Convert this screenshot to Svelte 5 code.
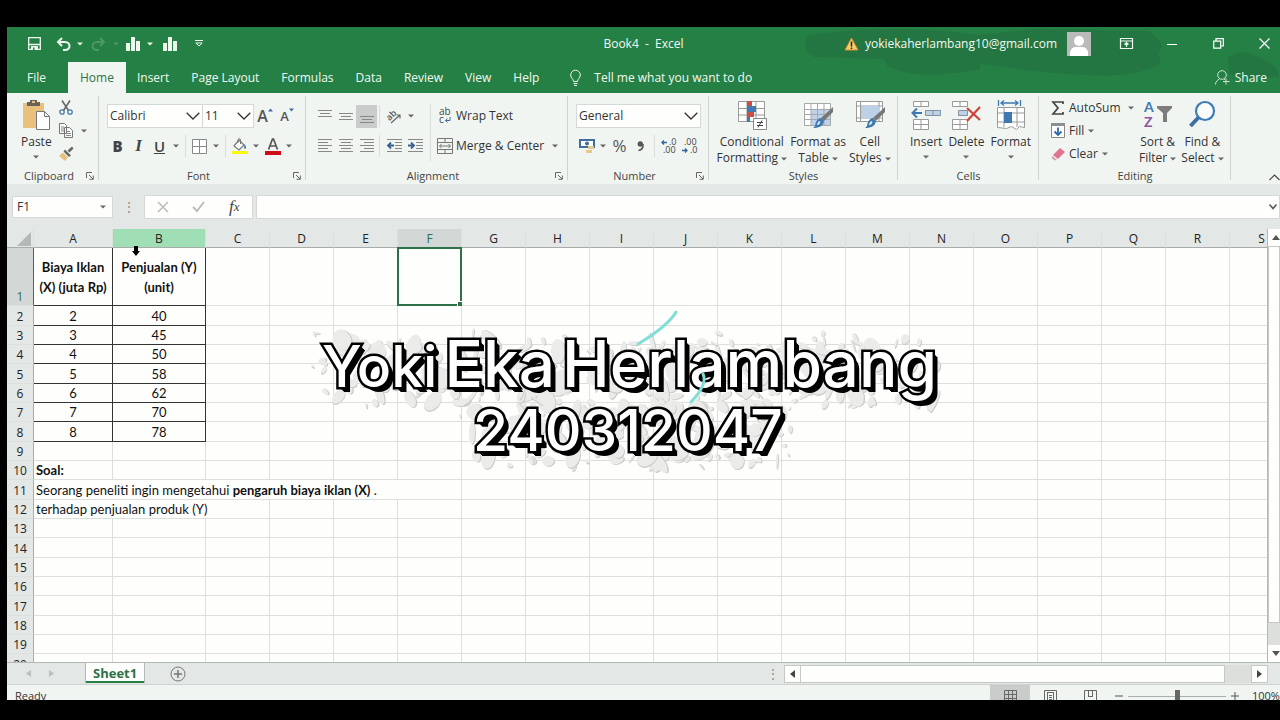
<script lang="ts">
  const menu = ['Insert', 'Page Layout', 'Formulas', 'Data', 'Review', 'View', 'Help'];
  const columns = 'ABCDEFGHIJKLMNOPQRS'.split('');
  const rest = columns.slice(2);

  const sales = [
    [2, 40],
    [3, 45],
    [4, 50],
    [5, 58],
    [6, 62],
    [7, 70],
    [8, 78]
  ];
  const lastRows = [13, 14, 15, 16, 17, 18, 19, 20];

  let selected = $state('F');
  let formula = $state('');
  let zoom = $state(50);

  // paint drops behind the caption
  let seed = 11;
  function random() {
    seed = (seed * 16807) % 2147483647;
    return seed / 2147483647;
  }

  function makeDrops(count: number, x: number, y: number, width: number, height: number, size: number) {
    return Array.from({ length: count }, () => ({
      x: Math.round(x + random() * width),
      y: Math.round(y + random() * height),
      rx: Math.round(1 + random() * size),
      ry: Math.round(1 + random() * size * 1.4),
      turn: Math.round(random() * 90 - 45)
    }));
  }

  const drops = [
    ...makeDrops(110, 8, 22, 640, 76, 3),
    ...makeDrops(190, 20, 30, 610, 62, 9),
    ...makeDrops(70, 155, 90, 330, 68, 3),
    ...makeDrops(110, 165, 96, 310, 56, 9)
  ];
</script>

{#snippet caret()}
  <svg class="caret" width="6" height="4" viewBox="0 0 6 4" aria-hidden="true"><path d="M0 .5h6L3 3.5z" fill="currentColor" /></svg>
{/snippet}

{#snippet chevron()}
  <svg class="chevron" width="14" height="8" viewBox="0 0 14 8" aria-hidden="true"><path d="M.7.7 7 7 13.3.7" fill="none" stroke="#333" stroke-width="1.3" /></svg>
{/snippet}

{#snippet launcher(name: string)}
  <button class="launcher" aria-label="{name} settings">
    <svg width="8" height="8" viewBox="0 0 8 8"><path d="M.5 6V.5H6M3 3l4 4M7.3 3.5v3.8H3.5" fill="none" stroke="#666" /></svg>
  </button>
{/snippet}

{#snippet lines(path: string)}
  <svg width="14" height="16" viewBox="0 0 14 16"><path d={path} stroke="#888" fill="none" /></svg>
{/snippet}

{#snippet bars()}
  <svg width="14" height="14" viewBox="0 0 14 14"><path d="M0 6h4v8H0zM5 0h4v14H5zM10 4h4v10h-4z" fill="#eef6ee" /></svg>
{/snippet}

{#snippet brush()}
  <path d="M30 8v5l-9 9-3-3z" fill="#777" />
  <path d="m18 19 3 3c-1 6-6 7-11 7 3-2 2-4 3-6s3-4 5-4z" fill="#3f79b0" />
  <path d="M17 22c-2 0-3 3-3 4 2 0 4-2 3-4z" fill="#dce8f2" />
{/snippet}

<div class="screen">
  <div class="window">
    <header>
      <svg class="smudge" width="480" height="66" viewBox="0 0 480 66" aria-hidden="true">
        <path d="M8 8q90-12 170 0l60-6 110 2q20 12 10 22 8 12-10 16-30 14-145-2l-23-4v6q-60 12-92-2l-4-8-70-2q-14-8-6-22zM428 30q16-10 34 2 18 8 17 18-40 4-50-4z" fill="#216b3b" opacity=".45" />
      </svg>
      <div class="titlebar">
        <div class="quick">
          <button class="w30" aria-label="Save">
            <svg width="13" height="13" viewBox="0 0 13 13"><path d="M.7.7h11.6v11.6H.7zM.7 7.5h11.6" fill="none" stroke="#eef6ee" stroke-width="1.3" /><path d="M3 9h7v4H3z" fill="#eef6ee" /><path d="M5 10.5h1.5V13H5z" fill="#258045" /></svg>
          </button>
          <button class="w28" aria-label="Undo">
            <svg width="15" height="14" viewBox="0 0 15 14"><path d="M6 1 2 5l4 4M2 5h7c6 0 6 8 0 8H7" fill="none" stroke="#eef6ee" stroke-width="2" /></svg>
          </button>
          {@render caret()}
          <button class="w30 dim" aria-label="Redo">
            <svg width="15" height="14" viewBox="0 0 15 14"><path d="m9 1 4 4-4 4M13 5H6c-6 0-6 8 0 8h2" fill="none" stroke="currentColor" stroke-width="2" /></svg>
          </button>
          <span class="dim">{@render caret()}</span>
          <button class="w28" aria-label="Column chart">{@render bars()}</button>
          {@render caret()}
          <button class="w34" aria-label="Insert chart">{@render bars()}</button>
          <button class="w24" aria-label="Customize toolbar">
            <svg width="8" height="7" viewBox="0 0 8 7"><path d="M0 .5h8M.8 3 4 6l3.200-3z" fill="none" stroke="#eef6ee" /></svg>
          </button>
        </div>
        <h1>Book4&nbsp; -&nbsp; Excel</h1>
        <div class="account">
          <svg class="warning" width="15" height="14" viewBox="0 0 15 14" aria-hidden="true"><path d="M7.500 1 14 13H1z" fill="#f5cf6e" stroke="#d98a2c" /><path d="M7.500 4.500v5M7.500 10.500v1.500" stroke="#222" stroke-width="1.500" /></svg>
          <span>yokiekaherlambang10@gmail.com</span>
          <svg class="avatar" width="24" height="24" viewBox="0 0 24 24" aria-hidden="true"><path d="M0 0h24v24H0z" fill="#b9bab9" /><circle cx="12" cy="9" r="5" fill="#fff" /><path d="M3 24c-1-8 4-9 6-9h6c3 0 7 2 6 9z" fill="#fff" /></svg>
          <button class="w46" aria-label="Ribbon display options">
            <svg width="13" height="11" viewBox="0 0 13 11"><path d="M.5.500h12v10H.5zM.5 3h12M6.500 9V4.500M4.500 6.500l2-2 2 2" fill="none" stroke="#eef6ee" stroke-width="1.200" /></svg>
          </button>
          <button class="w46" aria-label="Minimize">
            <svg width="10" height="10" viewBox="0 0 10 10"><path d="M0 5.500h10" stroke="#fff" /></svg>
          </button>
          <button class="w46" aria-label="Restore">
            <svg width="11" height="11" viewBox="0 0 11 11"><path d="M.7 3.200h7v7h-7zM3 3V.7h7.300V8H8" fill="none" stroke="#fff" stroke-width="1.200" /></svg>
          </button>
          <button class="w46" aria-label="Close">
            <svg width="11" height="11" viewBox="0 0 11 11"><path d="m.5.500 10 10M10.500.500l-10 10" stroke="#fff" stroke-width="1.200" /></svg>
          </button>
        </div>
      </div>
      <nav>
        <button class="file">File</button>
        <button class="current">Home</button>
        {#each menu as item}
          <button>{item}</button>
        {/each}
        <button class="tell">
          <svg width="11" height="16" viewBox="0 0 11 16"><path d="M3.500 11.500c0-3-2.800-3-2.800-6.500a4.800 4.800 0 0 1 9.600 0c0 3.500-2.800 3.500-2.800 6.500zM3.500 13.500h4M4 15.400h3" fill="none" stroke="#eef6ee" /></svg>
          Tell me what you want to do
        </button>
        <button class="share">
          <svg width="15" height="15" viewBox="0 0 15 15"><circle cx="7" cy="5" r="4.300" fill="none" stroke="#cfe5d3" /><path d="M.5 14.500c0-3 2-4.500 4-5.500M9 9l1 .7M11 8.500v6M8 11.500h6.500" fill="none" stroke="#cfe5d3" /></svg>
          Share
        </button>
      </nav>
    </header>

    <div class="ribbon">
      <section>
        <div class="body clipboard">
          <button class="big">
            <svg width="30" height="32" viewBox="0 0 30 32"><path d="M2 4h21v25H2z" fill="#e9c07c" /><path d="M6 3h3V1h7v2h3v4H6z" fill="#66625c" /><path d="M11 2h3v2h-3z" fill="#e9c07c" /><path d="M15.500 12.500h8l5 5v13h-13zM23.500 12.500v5h5" fill="#fff" stroke="#777" /></svg>
            <span>Paste</span>
            {@render caret()}
          </button>
          <div class="stack">
            <button aria-label="Cut">
              <svg width="14" height="15" viewBox="0 0 14 15"><path d="m3 .500 6.500 10M11 .500l-6.500 10" stroke="#666" stroke-width="1.600" /><circle cx="3" cy="12" r="2.200" fill="none" stroke="#4b7ba8" stroke-width="1.300" /><circle cx="11" cy="12" r="2.200" fill="none" stroke="#4b7ba8" stroke-width="1.300" /></svg>
            </button>
            <button aria-label="Copy">
              <svg width="14" height="15" viewBox="0 0 14 15"><path d="M.5.500h5l2 2v8h-7zM5.500 4.500h5l3 3v7h-8z" fill="#f8faf8" stroke="#777" /><path d="M2 4h3M2 6h3M2 8h3M7 8.500h4M7 10.500h5M7 12.500h5" stroke="#888" /></svg>
              {@render caret()}
            </button>
            <button aria-label="Format painter">
              <svg width="15" height="15" viewBox="0 0 15 15"><path d="m13 .500 1.500 2-4 4-2-2z" fill="#666" /><path d="m6 3.500 6 6-2 1.500-5.500-5.500z" fill="#666" /><path d="M4 6.500 9 11.500 6 15 0 10z" fill="#e9c07c" /></svg>
            </button>
          </div>
        </div>
        <footer><h2>Clipboard</h2>{@render launcher('Clipboard')}</footer>
      </section>

      <section>
        <div class="body font">
          <div class="row">
            <label class="combo grow"><select aria-label="Font name"><option>Calibri</option><option>Arial</option></select>{@render chevron()}</label>
            <label class="combo size"><select aria-label="Font size"><option>11</option><option>12</option></select>{@render chevron()}</label>
            <button class="w22 letter" aria-label="Increase font size">A<svg width="5" height="4" viewBox="0 0 5 4"><path d="M0 3.500 2.500.500 5 3.500z" fill="#3f6d9e" /></svg></button>
            <button class="w22 letter small" aria-label="Decrease font size">A<svg width="5" height="4" viewBox="0 0 5 4"><path d="M0 .500h5L2.500 3.500z" fill="#3f6d9e" /></svg></button>
          </div>
          <div class="row">
            <button class="w21 mark"><b>B</b></button>
            <button class="w21 mark"><i>I</i></button>
            <button class="w21 mark"><u>U</u></button>
            {@render caret()}
            <span class="bar"></span>
            <button class="w21" aria-label="Borders">
              <svg width="15" height="15" viewBox="0 0 15 15"><path d="M.5.500h14v14H.5zM7.500 0v15M0 7.500h15" fill="#fff" stroke="#888" /></svg>
            </button>
            {@render caret()}
            <span class="bar"></span>
            <button class="w21" aria-label="Fill colour">
              <svg width="16" height="16" viewBox="0 0 16 16"><path d="m7 2 5 5-5 5-5-4z" fill="#fff" stroke="#777" stroke-width="1.200" /><path d="M6 5V1.500q1.500-2 2.500 0V6" fill="none" stroke="#777" /><path d="M12 6c3 2 2 5 1 5-2-1 0-3-1-5z" fill="#3f79b0" /><path d="M0 13h16v3H0z" fill="#fbf90a" /></svg>
            </button>
            {@render caret()}
            <button class="w21" aria-label="Font colour">
              <svg width="16" height="17" viewBox="0 0 16 17"><path d="M3.500 11.500 7.500 1h1l4 10.500M5 8h6" fill="none" stroke="#555" stroke-width="1.700" /><path d="M0 13h16v4H0z" fill="#d00d16" /></svg>
            </button>
            {@render caret()}
          </div>
        </div>
        <footer><h2>Font</h2>{@render launcher('Font')}</footer>
      </section>

      <section>
        <div class="body split">
          <div class="aligns">
            <div class="row tight">
              <button class="w21" aria-label="Top align">{@render lines('M0 2.500h14M2 5.500h10M0 8.500h14')}</button>
              <button class="w21" aria-label="Middle align">{@render lines('M0 5.500h14M2 8.500h10M0 11.500h14')}</button>
              <button class="w21 on" aria-label="Bottom align">{@render lines('M0 8.500h14M2 11.500h10M0 14.500h14')}</button>
              <span class="bar"></span>
              <button class="w21" aria-label="Orientation">
                <svg width="15" height="15" viewBox="0 0 15 15"><text x="0" y="10" transform="rotate(-45 4 8)" font-size="9" font-weight="600" fill="#555">ab</text><path d="m4 14 9-8M9.500 6H13v3.500" fill="none" stroke="#666" stroke-width="1.200" /></svg>
              </button>
              {@render caret()}
            </div>
            <div class="row tight">
              <button class="w21" aria-label="Align left">{@render lines('M0 1.500h14M0 4.500h10M0 7.500h14M0 10.500h10M0 13.500h14')}</button>
              <button class="w21" aria-label="Center">{@render lines('M0 1.500h14M2 4.500h10M0 7.500h14M2 10.500h10M0 13.500h14')}</button>
              <button class="w21" aria-label="Align right">{@render lines('M0 1.500h14M4 4.500h10M0 7.500h14M4 10.500h10M0 13.500h14')}</button>
              <span class="bar"></span>
              <button class="w21" aria-label="Decrease indent">
                <svg width="15" height="16" viewBox="0 0 15 16"><path d="M0 1.500h15M8 4.500h7M8 7.500h7M8 10.500h7M0 13.500h15" stroke="#888" /><path d="M7 7.500H1.500M4 4.500l-3 3 3 3" fill="none" stroke="#3a628f" stroke-width="1.800" /></svg>
              </button>
              <button class="w21" aria-label="Increase indent">
                <svg width="15" height="16" viewBox="0 0 15 16"><path d="M0 1.500h15M8 4.500h7M8 7.500h7M8 10.500h7M0 13.500h15" stroke="#888" /><path d="M0 7.500h5.500M3 4.500l3 3-3 3" fill="none" stroke="#3a628f" stroke-width="1.800" /></svg>
              </button>
            </div>
          </div>
          <div class="merges">
            <div class="row">
              <button class="text">
                <svg width="16" height="18" viewBox="0 0 16 18"><text x="2" y="8" font-size="10" fill="#444">ab</text><text x="2" y="16" font-size="10" fill="#444">c</text><path d="M13 10v3.500H8.500M10.500 11.500l-2 2 2 2" fill="none" stroke="#4569a0" /></svg>
                Wrap Text
              </button>
            </div>
            <div class="row">
              <button class="text">
                <svg width="16" height="16" viewBox="0 0 16 16"><path d="M.5.500h15v15H.5zM0 4.500h16M0 11.500h16M8 0v4.500M8 11.500V16M2.500 8h11M4.500 6l-2 2 2 2M11.500 6l2 2-2 2" fill="none" stroke="#777" /></svg>
                Merge &amp; Center
                {@render caret()}
              </button>
            </div>
          </div>
        </div>
        <footer><h2>Alignment</h2>{@render launcher('Alignment')}</footer>
      </section>

      <section>
        <div class="body number">
          <div class="row">
            <label class="combo grow"><select aria-label="Number format"><option>General</option><option>Number</option></select>{@render chevron()}</label>
          </div>
          <div class="row">
            <button class="w21" aria-label="Accounting format">
              <svg width="16" height="16" viewBox="0 0 16 16"><path d="M1 2h14v7H1z" fill="#fff" stroke="#3f6d9e" stroke-width="2" /><circle cx="8" cy="5.500" r="2" fill="#3f6d9e" /><path d="M9 8h6v3H9zM7 12h6v3H7z" fill="#e9c88c" /></svg>
            </button>
            {@render caret()}
            <button class="w21 percent">%</button>
            <button class="w21 comma" aria-label="Comma style"><svg width="7" height="10" viewBox="0 0 7 10"><circle cx="3.300" cy="3" r="2.700" fill="#555" /><path d="M6 3c.5 4-2 6-4.500 6.500" fill="none" stroke="#555" stroke-width="1.500" /></svg></button>
            <span class="bar"></span>
            <button class="w21" aria-label="Increase decimal">
              <svg width="16" height="18" viewBox="0 0 16 18"><text x="8" y="8" font-size="9" fill="#444">.0</text><text x="2" y="16" font-size="9" fill="#444">.00</text><path d="M6 5.500H1M3 3.500l-2 2 2 2" fill="none" stroke="#33649a" stroke-width="1.300" /></svg>
            </button>
            <button class="w21" aria-label="Decrease decimal">
              <svg width="16" height="18" viewBox="0 0 16 18"><text x="2" y="8" font-size="9" fill="#444">.00</text><text x="8" y="16" font-size="9" fill="#444">.0</text><path d="M0 13.500h5M3 11.500l2 2-2 2" fill="none" stroke="#33649a" stroke-width="1.300" /></svg>
            </button>
          </div>
        </div>
        <footer><h2>Number</h2>{@render launcher('Number')}</footer>
      </section>

      <section>
        <div class="body styles">
          <button class="big">
            <svg width="30" height="32" viewBox="0 0 30 32"><path d="M1.500 2.500h26v20h-26zM1 9.500h27M1 16h27M10 2v21M19 2v21" fill="#fff" stroke="#999" /><path d="M10 2h5v5h-5zM10 13h7v5h-7z" fill="#c94f46" /><path d="M10 7h9v6h-9zM10 18h3v5h-3z" fill="#3f79b0" /><path d="M16.500 19.500h13v11h-13z" fill="#fff" stroke="#888" /><path d="M20 23.500h6M20 26.500h6M25 21.500l-4 7" stroke="#444" /></svg>
            <span>Conditional<br />Formatting {@render caret()}</span>
          </button>
          <button class="big">
            <svg width="30" height="32" viewBox="0 0 30 32"><path d="M1.500 4.500h26v22h-26z" fill="#fff" /><path d="M8 10h19v16H8z" fill="#bed3ea" /><path d="M1.500 4.500h26v22h-26zM1 10.500h27M1 15.500h27M1 20.500h27M8 4v23M14.500 4v23M21 4v23" fill="none" stroke="#a5a9ab" />{@render brush()}</svg>
            <span>Format as<br />Table {@render caret()}</span>
          </button>
          <button class="big">
            <svg width="30" height="32" viewBox="0 0 30 32"><path d="M1.500 2.500h26v20h-26zM1 7h27M5.500 2v21M24 2v21M1 19h27" fill="#fff" stroke="#999" /><path d="M6 7h18v12H6z" fill="#bcd0e6" />{@render brush()}</svg>
            <span>Cell<br />Styles {@render caret()}</span>
          </button>
        </div>
        <footer><h2>Styles</h2></footer>
      </section>

      <section>
        <div class="body cells">
          <button class="big">
            <svg width="30" height="32" viewBox="0 0 30 32"><path d="M2.500 2.500h15v5h-15zM10 2v6M2.500 20.500h15v10h-15zM2 25.500h16M10 20v11" fill="#fff" stroke="#999" /><path d="M14.500 11.500h15v5h-15zM22 11v6" fill="#bfd1e4" stroke="#8091a3" /><path d="M11 14H1.500M6 9.500 1.500 14 6 18.500" fill="none" stroke="#3f79b0" stroke-width="2" /></svg>
            <span>Insert</span>
            {@render caret()}
          </button>
          <button class="big">
            <svg width="30" height="32" viewBox="0 0 30 32"><path d="M1.500 2.500h15v5h-15zM9 2v6M1.500 20.500h15v10h-15zM1 25.500h16M9 20v11" fill="#fff" stroke="#999" /><path d="M7.500 11.500h9v5h-9z" fill="#bfd1e4" stroke="#8091a3" /><path d="m16 9 13 12M29 8 16 22" stroke="#cf4436" stroke-width="2.200" /></svg>
            <span>Delete</span>
            {@render caret()}
          </button>
          <button class="big">
            <svg width="30" height="32" viewBox="0 0 30 32"><path d="M1.500 8.500h27v20l-5-1-3 3-5-3-5 2-9-1zM1 14h28M1 23h28M8 8v20M21 8v20" fill="#fff" stroke="#999" /><path d="M8 13h8v11H8z" fill="#3f79b0" /><path d="M2.500 1v6M24.500 1v6M5 4h17M8 1.500 5 4l3 2.500M19 1.500 22 4l-3 2.500" fill="none" stroke="#3f79b0" stroke-width="1.300" /></svg>
            <span>Format</span>
            {@render caret()}
          </button>
        </div>
        <footer><h2>Cells</h2></footer>
      </section>

      <section>
        <div class="body editing">
          <div class="list">
            <button class="text">
              <svg width="14" height="14" viewBox="0 0 14 14"><path d="M12 3V1H2l5 6-5 6h10v-2" fill="none" stroke="#444" stroke-width="1.700" /></svg>
              <span class="wide">AutoSum</span>{@render caret()}
            </button>
            <button class="text">
              <svg width="14" height="15" viewBox="0 0 14 15"><path d="M.5.500h13v14H.5z" fill="#fff" stroke="#888" /><path d="M0 0h14v3H0z" fill="#8b8f92" /><path d="M7 4.500V12M3.500 8.500 7 12l3.500-3.500" fill="none" stroke="#2f69a6" stroke-width="1.800" /></svg>
              Fill {@render caret()}
            </button>
            <button class="text">
              <svg width="14" height="14" viewBox="0 0 14 14"><path d="m9 1 5 4-7 7-5-4z" fill="#dd7590" /><path d="m1.500 9 4.500 4-2 .500-3.500-2.500z" fill="#c9a3ad" /></svg>
              Clear {@render caret()}
            </button>
          </div>
          <button class="big">
            <svg class="sort" width="30" height="32" viewBox="0 0 30 32"><text x="1" y="13" font-size="14" fill="#3f79b0">A</text><text x="1" y="28" font-size="14" fill="#8757a5">Z</text><path d="M14 7h15v2l-5 5v9h-4v-9l-6-5z" fill="#7d7d7d" /></svg>
            <span>Sort &amp;<br />Filter {@render caret()}</span>
          </button>
          <button class="big">
            <svg width="30" height="32" viewBox="0 0 30 32"><circle cx="18" cy="12" r="9" fill="#fbfdfd" stroke="#3c7cb8" stroke-width="2.200" /><path d="m11.500 18.500-8 8.500" stroke="#3c70a5" stroke-width="4" /></svg>
            <span>Find &amp;<br />Select {@render caret()}</span>
          </button>
        </div>
        <footer><h2>Editing</h2></footer>
      </section>

      <div class="collapse">
        <button aria-label="Collapse the ribbon"><svg width="11" height="7" viewBox="0 0 11 7"><path d="M.5 6 5.500 1l5 5" fill="none" stroke="#444" stroke-width="1.200" /></svg></button>
      </div>
    </div>

    <div class="formula">
      <button class="name">F1 {@render caret()}</button>
      <span class="grip">⋮</span>
      <div class="checks">
        <button aria-label="Cancel"><svg width="12" height="12" viewBox="0 0 12 12"><path d="m1 1 10 10M11 1 1 11" stroke="#bbb" stroke-width="1.500" /></svg></button>
        <button aria-label="Enter"><svg width="13" height="11" viewBox="0 0 13 11"><path d="m1 6 4 4 7-9" fill="none" stroke="#bbb" stroke-width="2" /></svg></button>
        <button class="fx">f<small>x</small></button>
      </div>
      <label class="input"><input aria-label="Formula" bind:value={formula} /><svg width="8" height="6" viewBox="0 0 8 6" aria-hidden="true"><path d="m.5.500 3.500 4 3.500-4" fill="none" stroke="#555" stroke-width="1.500" /></svg></label>
    </div>

    <main>
      <div class="sheet">
        <table>
          <colgroup>
            <col class="numbers" />
            <col class="first" />
            <col class="second" />
            {#each rest as name (name)}<col />{/each}
          </colgroup>
          <thead>
            <tr>
              <td class="corner"><svg width="14" height="14" viewBox="0 0 14 14" aria-hidden="true"><path d="M14 0v14H0z" fill="#b4b8b6" /></svg></td>
              {#each columns as name (name)}
                <th scope="col" class:active={name == selected} class:hover={name == 'B'}>{name}</th>
              {/each}
            </tr>
          </thead>
          <tbody>
            <tr class="tall">
              <th scope="row" class="active">1</th>
              <td class="boxed strong">Biaya Iklan<br />(X) (juta Rp)</td>
              <td class="boxed strong">Penjualan (Y)<br />(unit)</td>
              {#each rest as name (name)}
                <td>{#if name == selected}<span class="selection"></span>{/if}</td>
              {/each}
            </tr>
            {#each sales as [cost, units], i}
              <tr>
                <th scope="row">{i + 2}</th>
                <td class="boxed">{cost}</td>
                <td class="boxed">{units}</td>
                {#each rest as name (name)}<td></td>{/each}
              </tr>
            {/each}
            <tr>
              <th scope="row">9</th>
              {#each columns as name (name)}<td></td>{/each}
            </tr>
            <tr>
              <th scope="row">10</th>
              <td><b>Soal:</b></td>
              {#each columns.slice(1) as name (name)}<td></td>{/each}
            </tr>
            <tr>
              <th scope="row">11</th>
              <td colspan="6">Seorang peneliti ingin mengetahui <b>pengaruh biaya iklan (X)</b> .</td>
              {#each columns.slice(6) as name (name)}<td></td>{/each}
            </tr>
            <tr>
              <th scope="row">12</th>
              <td colspan="3">terhadap penjualan produk (Y)</td>
              {#each columns.slice(3) as name (name)}<td></td>{/each}
            </tr>
            {#each lastRows as row}
              <tr>
                <th scope="row">{row}</th>
                {#each columns as name (name)}<td></td>{/each}
              </tr>
            {/each}
          </tbody>
        </table>
        <svg class="pointer" width="8" height="11" viewBox="0 0 8 11" aria-hidden="true"><path d="M2 0h4v5h2L4 10 0 5h2z" /></svg>
      </div>
      <div class="vertical">
        <button aria-label="Scroll up"><svg width="8" height="5" viewBox="0 0 8 5"><path d="M0 5 4 0l4 5z" fill="#555" /></svg></button>
        <div class="thumb"></div>
        <button aria-label="Scroll down"><svg width="8" height="5" viewBox="0 0 8 5"><path d="M0 0h8L4 5z" fill="#555" /></svg></button>
      </div>
    </main>

    <div class="sheets">
      <button class="step" aria-label="Previous sheet"><svg width="5" height="7" viewBox="0 0 5 7"><path d="M5 0v7L0 3.500z" fill="#bcc0be" /></svg></button>
      <button class="step" aria-label="Next sheet"><svg width="5" height="7" viewBox="0 0 5 7"><path d="M0 0v7l5-3.500z" fill="#bcc0be" /></svg></button>
      <button class="tab">Sheet1</button>
      <button class="add" aria-label="New sheet"><svg width="16" height="16" viewBox="0 0 16 16"><circle cx="8" cy="8" r="7" fill="none" stroke="#777" /><path d="M8 4v8M4 8h8" stroke="#777" stroke-width="1.500" /></svg></button>
      <span class="grip">⋮</span>
      <div class="horizontal">
        <button aria-label="Scroll left"><svg width="5" height="8" viewBox="0 0 5 8"><path d="M5 0v8L0 4z" fill="#444" /></svg></button>
        <div class="thumb"></div>
        <button aria-label="Scroll right"><svg width="5" height="8" viewBox="0 0 5 8"><path d="M0 0v8l5-4z" fill="#444" /></svg></button>
      </div>
    </div>

    <div class="status">
      <span class="ready">Ready</span>
      <button class="view on" aria-label="Normal view"><svg width="13" height="13" viewBox="0 0 13 13"><path d="M.5.500h12v12H.5zM0 4.500h13M0 8.500h13M4.500 0v13M8.500 0v13" fill="none" stroke="#666" /></svg></button>
      <button class="view" aria-label="Page layout view"><svg width="13" height="13" viewBox="0 0 13 13"><path d="M.5.500h12v12H.5zM3.500 3v10M9.500 3v10M3 2.500h7M5 5.500h3M5 7.500h3M5 9.500h3" fill="none" stroke="#666" /></svg></button>
      <button class="view" aria-label="Page break view"><svg width="13" height="13" viewBox="0 0 13 13"><path d="M.5.500h12v12H.5zM4.500 0v7M8.500 0v7M4 6.500h5" fill="none" stroke="#666" /></svg></button>
      <button class="zoom" aria-label="Zoom out"><svg width="8" height="8" viewBox="0 0 8 8"><path d="M0 4h8" stroke="#555" /></svg></button>
      <input type="range" aria-label="Zoom" bind:value={zoom} />
      <button class="zoom" aria-label="Zoom in"><svg width="8" height="8" viewBox="0 0 8 8"><path d="M0 4h8M4 0v8" stroke="#555" /></svg></button>
      <span class="amount">100%</span>
    </div>

    <div class="caption">
      <svg width="660" height="170" viewBox="0 0 660 170" aria-hidden="true">
        {#each drops as drop}
          <ellipse cx={drop.x + 1} cy={drop.y + 1} rx={drop.rx} ry={drop.ry} transform="rotate({drop.turn} {drop.x} {drop.y})" fill="#cbccca" />
          <ellipse cx={drop.x} cy={drop.y} rx={drop.rx} ry={drop.ry} transform="rotate({drop.turn} {drop.x} {drop.y})" fill="#ebebe9" />
        {/each}
      </svg>
      <p><span class="lead">Yoki</span><span>Eka</span><span>Herlambang</span></p>
      <p class="id">240312047</p>
      <svg width="660" height="170" viewBox="0 0 660 170" aria-hidden="true">
        <path d="M371 2q-8 14-38 32M398 64q5 10-12 28" fill="none" stroke="#7edfd6" stroke-width="3" stroke-linecap="round" />
      </svg>
    </div>
  </div>
</div>

<style>
  :global(body) {
    margin: 0;
    background: #000;
  }

  .screen {
    box-sizing: border-box;
    height: 100vh;
    padding: 27px 0 20px 7px;
    overflow: hidden;
    background: #000;
    font-family: 'Open Sans', 'Noto Sans', sans-serif;
    font-size: 12px;
    line-height: 16px;
    color: #333;
  }

  .window {
    position: relative;
    display: flex;
    flex-direction: column;
    height: 100%;
    overflow: hidden;
    background: #e3e7e6;
  }

  button,
  input,
  select {
    padding: 0;
    border: 0;
    background: none;
    font: inherit;
    color: inherit;
  }

  button {
    display: flex;
    flex-shrink: 0;
    align-items: center;
    justify-content: center;
    white-space: nowrap;
  }

  svg {
    flex-shrink: 0;
    overflow: visible;
  }

  h1,
  h2,
  p {
    margin: 0;
    font-size: 12px;
    font-weight: 400;
  }

  header {
    position: relative;
    background: #258045;
    color: #f2f9f2;
  }

  .smudge {
    position: absolute;
    top: 0;
    right: 0;
  }

  .titlebar {
    position: relative;
    display: grid;
    grid-template-columns: 1fr auto 1fr;
    align-items: center;
    height: 33px;
  }

  .quick,
  .account {
    display: flex;
    align-items: center;
  }

  .quick {
    padding-left: 12px;
  }

  .dim {
    display: flex;
    color: #4c9965;
  }

  .account {
    justify-content: flex-end;
  }

  .warning {
    margin-right: 6px;
  }

  .avatar {
    margin: 0 12px 0 10px;
  }

  .w21 { width: 21px; }
  .w22 { width: 22px; }
  .w24 { width: 24px; }
  .w28 { width: 28px; }
  .w30 { width: 30px; }
  .w34 { width: 34px; }
  .w46 { width: 46px; }

  .account .w46:last-child {
    width: 32px;
    margin-left: 7px;
  }

  nav {
    position: relative;
    display: flex;
    height: 33px;
    align-items: flex-end;
  }

  nav button {
    height: 31px;
    padding: 0 11px;
  }

  nav .file {
    padding: 0 22px 0 20px;
  }

  nav .current {
    padding: 0 12px;
    background: #f1f5f2;
    color: #2c7148;
  }

  nav .tell {
    gap: 13px;
    padding-left: 20px;
  }

  nav .share {
    gap: 5px;
    margin-left: auto;
    padding-right: 13px;
  }

  .ribbon {
    display: grid;
    grid-template-columns: 92fr 207fr 262fr 141fr 189fr 141fr 192fr 49fr;
    height: 91px;
    background: #f1f5f2;
  }

  section {
    display: flex;
    flex-direction: column;
    min-width: 0;
    background: linear-gradient(#cfd3d0, #cfd3d0) right 3px / 1px 84px no-repeat;
  }

  .body {
    flex: 1;
    min-height: 0;
  }

  footer {
    display: flex;
    height: 16px;
    padding: 0 5px;
  }

  footer h2 {
    flex: 1;
    font-size: 11px;
    text-align: center;
    color: #444;
  }

  .row {
    display: flex;
    align-items: center;
    height: 24px;
  }

  .row + .row {
    margin-top: 6px;
  }

  .caret {
    display: inline-block;
    vertical-align: middle;
  }

  .ribbon .caret,
  .formula .caret {
    color: #666;
  }

  .bar {
    width: 1px;
    height: 22px;
    margin: 0 3px;
    background: #d9dddb;
  }

  .font .caret,
  .number .caret {
    margin: 0 3px;
  }

  .tight .bar {
    margin: 0 4px 0 2px;
  }

  .tight .caret {
    margin-left: 3px;
  }

  .big {
    flex-direction: column;
    justify-content: flex-start;
  }

  .big > svg:first-child {
    margin: 6px 0 3px;
  }

  .big > .caret {
    margin-top: 5px;
  }

  .sort {
    font-family: Lato, sans-serif;
    font-weight: 700;
  }

  .clipboard {
    display: flex;
    padding-left: 14px;
  }

  .stack {
    padding: 6px 0 0 7px;
  }

  .stack button {
    gap: 8px;
    height: 17px;
    margin-bottom: 6px;
  }

  .font,
  .number {
    padding: 11px 8px 0;
  }

  .combo {
    position: relative;
    display: block;
    height: 22px;
    border: 1px solid #d4d8d6;
    background: #fefffd;
  }

  .combo.grow {
    flex: 1;
  }

  .combo.size {
    width: 50px;
    margin-left: -1px;
  }

  .combo select {
    width: 100%;
    height: 100%;
    padding-left: 2px;
    appearance: none;
  }

  .chevron {
    position: absolute;
    top: 7px;
    right: 2px;
  }

  .letter {
    align-items: flex-start;
    font-size: 16px;
    font-weight: 600;
    color: #555;
  }

  .letter.small {
    font-size: 13px;
  }

  .mark {
    font-size: 15px;
    font-weight: 600;
    color: #444;
  }

  .mark i {
    font-family: 'Liberation Serif', serif;
    font-size: 17px;
  }

  .split {
    display: flex;
    padding: 11px 0 0 8px;
  }

  .on {
    height: 23px;
    background: #c9cccb;
  }

  .aligns {
    width: 116px;
    height: 57px;
    border-right: 1px solid #d9dddb;
  }

  .merges {
    padding-left: 6px;
  }

  .text {
    gap: 3px;
  }

  .merges .caret {
    margin-left: 5px;
  }

  .percent {
    font-size: 17px;
    color: #555;
  }

  .styles,
  .cells {
    display: flex;
    justify-content: center;
    gap: 3px;
  }

  .cells {
    gap: 6px;
    padding-left: 4px;
  }

  .editing {
    display: flex;
    gap: 5px;
    padding-left: 12px;
  }

  .list {
    padding-top: 4px;
  }

  .list button {
    gap: 4px;
    height: 21px;
    margin-bottom: 2px;
  }

  .wide {
    min-width: 55px;
    text-align: left;
  }

  .collapse {
    display: flex;
    align-items: flex-end;
    justify-content: flex-end;
    padding-bottom: 3px;
  }

  .formula {
    display: flex;
    align-items: center;
    height: 45px;
    padding-left: 5px;
  }

  .name,
  .checks,
  .input {
    height: 22px;
    border: 1px solid #d4d8d6;
    background: #fefffd;
  }

  .name {
    justify-content: space-between;
    width: 101px;
    padding: 0 6px 0 4px;
  }

  .grip {
    width: 31px;
    text-align: center;
    color: #888;
  }

  .checks {
    display: flex;
    width: 107px;
  }

  .checks button {
    flex: 1;
  }

  .fx {
    font-family: 'Liberation Serif', serif;
    font-size: 17px;
    font-style: italic;
    color: #444;
  }

  .fx small {
    font-size: 13px;
  }

  .input {
    display: flex;
    flex: 1;
    align-items: center;
    margin-left: 3px;
    padding-right: 2px;
  }

  .input input {
    flex: 1;
    min-width: 0;
    outline: none;
  }

  main {
    display: flex;
    flex: 1;
    min-height: 0;
    border-bottom: 1px solid #b4b8b6;
  }

  .sheet {
    position: relative;
    flex: 1;
    min-width: 0;
    overflow: hidden;
    border-right: 1px solid #b4b8b6;
    background: #fefffd;
  }

  table {
    table-layout: fixed;
    width: 1287px;
    border-spacing: 0;
  }

  col {
    width: 64px;
  }

  .numbers {
    width: 27px;
  }

  .first {
    width: 79px;
  }

  .second {
    width: 93px;
  }

  th,
  td {
    position: relative;
    box-sizing: border-box;
    height: 19px;
    padding: 0;
    border-right: 1px solid #dcdfdc;
    border-bottom: 1px solid #dcdfdc;
    line-height: 16px;
    white-space: nowrap;
  }

  tbody td {
    padding-left: 2px;
    font-family: Lato, 'Open Sans', sans-serif;
    font-size: 13px;
    color: #111;
  }

  tbody tr:nth-child(3n + 2) > * {
    height: 20px;
  }

  th,
  .corner {
    background: #e3e7e6;
    font-weight: 400;
    color: #222;
  }

  thead th,
  .corner {
    padding-top: 2px;
    border-bottom-color: #a8acaa;
  }

  .corner svg {
    display: block;
    margin-left: 10px;
  }

  tbody th {
    border-right-color: #a8acaa;
    vertical-align: bottom;
  }

  th.active {
    background: #d3d7d5;
    color: #2c7148;
  }

  tbody th.active {
    border-right-color: #258045;
  }

  th.hover {
    background: #a0dfb5;
  }

  .tall > * {
    height: 58px;
  }

  td.boxed {
    padding: 0;
    border-color: #333;
    text-align: center;
  }

  td.strong {
    font-weight: 700;
    line-height: 20px;
  }

  .selection {
    position: absolute;
    inset: -1px;
    border: 2px solid #2c7148;
  }

  .selection::after {
    content: '';
    position: absolute;
    right: -3px;
    bottom: -3px;
    width: 4px;
    height: 4px;
    border: 1px solid #fff;
    background: #2c7148;
  }

  .pointer {
    position: absolute;
    top: 17px;
    left: 125px;
  }

  .vertical {
    display: flex;
    flex-direction: column;
    width: 12px;
    overflow: hidden;
    background: #dcdfdc;
  }

  .vertical button {
    width: 16px;
    height: 17px;
    background: #fefffd;
  }

  .vertical .thumb {
    flex: 1;
    margin-bottom: 22px;
    border: 1px solid #c4c8c6;
    background: #fefffd;
  }

  .sheets {
    display: flex;
    align-items: center;
    height: 21px;
    border-bottom: 1px solid #cfd3d0;
  }

  .step {
    width: 22px;
    margin-right: 1px;
  }

  .sheets .step:first-child {
    margin-left: 10px;
  }

  .tab {
    height: 20px;
    margin: -2px 0 0 22px;
    padding: 0 7px;
    border: solid #b4b8b6;
    border-width: 0 1px;
    box-shadow: inset 0 -2px #258045;
    background: #fefffd;
    font-size: 13px;
    font-weight: 700;
    color: #2c7148;
  }

  .add {
    margin: 0 auto 0 25px;
  }

  .sheets .grip {
    width: 22px;
  }

  .horizontal {
    display: flex;
    width: 38%;
    height: 18px;
    margin-right: 12px;
    background: #dcdfdc;
  }

  .horizontal button {
    box-sizing: border-box;
    width: 17px;
    border: 1px solid #c4c8c6;
    background: #fefffd;
  }

  .horizontal .thumb {
    flex: 1;
    margin-right: 26px;
    border: solid #c4c8c6;
    border-width: 1px 1px 1px 0;
    background: #fefffd;
  }

  .status {
    display: flex;
    flex-shrink: 0;
    align-items: center;
    height: 22px;
    margin-bottom: -7px;
    padding-left: 8px;
    background: #f1f5f2;
  }

  .ready {
    margin-right: auto;
    font-size: 11px;
  }

  .view {
    width: 40px;
    height: 22px;
  }

  .zoom {
    width: 18px;
  }

  .status input {
    width: 98px;
    height: 16px;
    margin: 0;
    appearance: none;
    background: linear-gradient(#aaaeac, #aaaeac) center / 100% 1px no-repeat;
  }

  .status input::-webkit-slider-thumb {
    width: 5px;
    height: 12px;
    appearance: none;
    background: #666;
  }

  .amount {
    width: 28px;
    margin-left: 8px;
    font-size: 11px;
  }

  .caption {
    position: absolute;
    top: 283px;
    left: 298px;
    width: 660px;
    height: 170px;
    font-family: Inter, sans-serif;
    pointer-events: none;
  }

  .caption svg {
    position: absolute;
    inset: 0;
  }

  .caption p {
    position: relative;
    display: flex;
    align-items: baseline;
    gap: 7px;
    padding: 22px 0 0 17px;
    font-size: 64px;
    font-weight: 500;
    line-height: 64px;
    color: #fff;
    -webkit-text-stroke: 5px #000;
    paint-order: stroke fill;
    text-shadow:
      1px 1px #000,
      2px 2px #000,
      3px 3px #000,
      4px 4px #000,
      5px 5px #000;
  }

  .caption .lead {
    font-size: 57px;
  }

  .caption .id {
    padding: 0 0 0 168px;
    font-size: 57px;
  }
</style>
